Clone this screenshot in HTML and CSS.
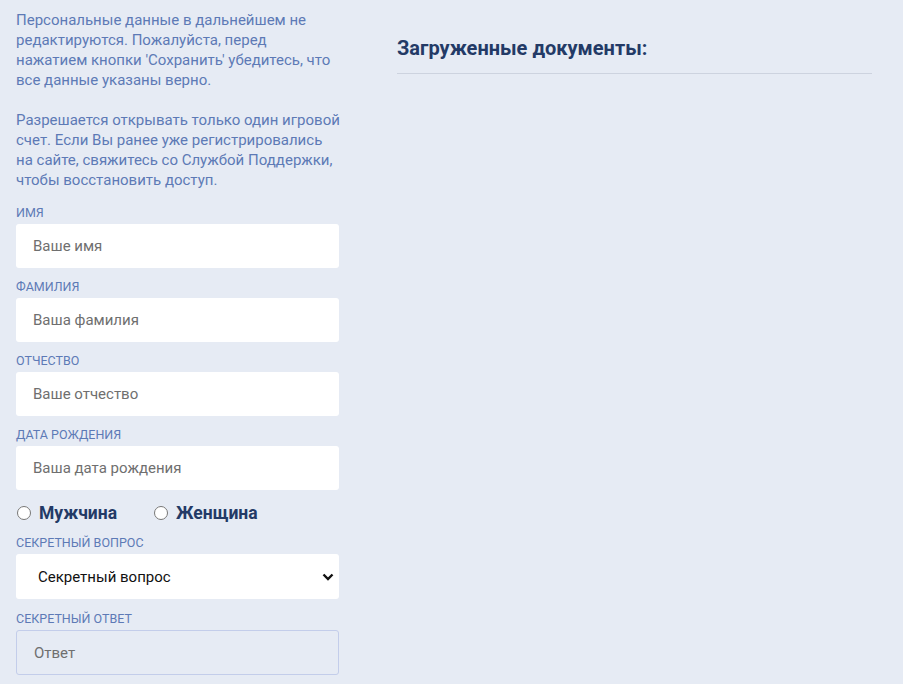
FILE: index.html
```html
<!DOCTYPE html>
<html lang="ru">
<head>
  <meta charset="UTF-8">
  <meta name="viewport" content="width=device-width, initial-scale=1.0">
  <title>Личные данные</title>
  <link rel="stylesheet" href="styles.css">
</head>
<body>
  <div class="page">
    <form class="profile">
      <p class="note">Персональные данные в дальнейшем не редактируются. Пожалуйста, перед нажатием кнопки 'Сохранить' убедитесь, что все данные указаны верно.</p>
      <p class="note">Разрешается открывать только один игровой счет. Если Вы ранее уже регистрировались на сайте, свяжитесь со Службой Поддержки, чтобы восстановить доступ.</p>

      <label class="field">
        <span class="field-label">Имя</span>
        <input class="field-input" type="text" placeholder="Ваше имя">
      </label>
      <label class="field">
        <span class="field-label">Фамилия</span>
        <input class="field-input" type="text" placeholder="Ваша фамилия">
      </label>
      <label class="field">
        <span class="field-label">Отчество</span>
        <input class="field-input" type="text" placeholder="Ваше отчество">
      </label>
      <label class="field">
        <span class="field-label">Дата рождения</span>
        <input class="field-input" type="text" placeholder="Ваша дата рождения">
      </label>

      <div class="gender">
        <label class="radio"><input type="radio" name="gender"> Мужчина</label>
        <label class="radio"><input type="radio" name="gender"> Женщина</label>
      </div>

      <label class="field field-question">
        <span class="field-label">Секретный вопрос</span>
        <div class="select-wrap">
          <select class="field-select">
            <option>Секретный вопрос</option>
          </select>
          <svg class="select-arrow" width="12" height="8" viewBox="0 0 12 8"><path d="M1.5 1.5 6 6l4.5-4.5" fill="none" stroke="#111" stroke-width="2.4"/></svg>
        </div>
      </label>
      <label class="field">
        <span class="field-label">Секретный ответ</span>
        <input class="field-input disabled" type="text" placeholder="Ответ" disabled>
      </label>
    </form>

    <div class="docs">
      <h2 class="docs-title">Загруженные документы:</h2>
    </div>
  </div>
</body>
</html>
```

FILE: styles.css
```css
*{
  margin: 0;
  padding: 0;
  box-sizing: border-box;
}
body{
  background: #e6ebf4;
  font-family: Roboto, "Liberation Sans", Arial, sans-serif;
  color: #233a66;
}
.page{
  display: flex;
  gap: 58px;
  padding: 10px 16px 0 16px;
}
.profile{
  width: 323px;
  flex-shrink: 0;
  display: flex;
  flex-direction: column;
}
.note{
  font-size: 15px;
  line-height: 20px;
  color: #5d7ab6;
  margin-right: -1.5px;
  margin-bottom: 20px;
}
.note + .note{
  margin-bottom: 16px;
}
.field{
  display: flex;
  flex-direction: column;
  margin-bottom: 12px;
}
.field-question{
  margin-bottom: 13px;
}
.field-label{
  font-size: 12.5px;
  line-height: 14px;
  text-transform: uppercase;
  color: #5d7ab6;
  margin-bottom: 4px;
}
.field-input{
  height: 44px;
  border: none;
  border-radius: 3px;
  background: #fff;
  padding: 0 17px;
  font-family: inherit;
  font-size: 15px;
  color: #333;
  outline: none;
}
.field-input::placeholder{
  color: #6f6f6f;
}
.field-input.disabled{
  height: 45px;
  background: #e6ebf4;
  border: 1px solid #c3cdea;
}
.select-wrap{
  position: relative;
}
.field-select{
  width: 100%;
  height: 45px;
  border: none;
  border-radius: 3px;
  background: #fff;
  padding: 0 18px 0 22px;
  font-family: inherit;
  font-size: 15px;
  color: #111;
  outline: none;
  appearance: none;
}
.select-arrow{
  position: absolute;
  right: 5px;
  top: 19px;
  pointer-events: none;
}
.gender{
  display: flex;
  gap: 36px;
  height: 22px;
  margin-bottom: 12px;
}
.radio{
  display: flex;
  align-items: center;
  gap: 8px;
  font-size: 17.5px;
  font-weight: bold;
  color: #233a66;
}
.radio input{
  width: 14px;
  height: 14px;
  margin: 0 0 0 1px;
}
.docs{
  width: 475px;
  padding-top: 26px;
}
.docs-title{
  font-size: 20px;
  font-weight: bold;
  line-height: 24px;
  color: #233a66;
  padding-bottom: 13px;
  border-bottom: 1px solid #cdd3df;
}
```
